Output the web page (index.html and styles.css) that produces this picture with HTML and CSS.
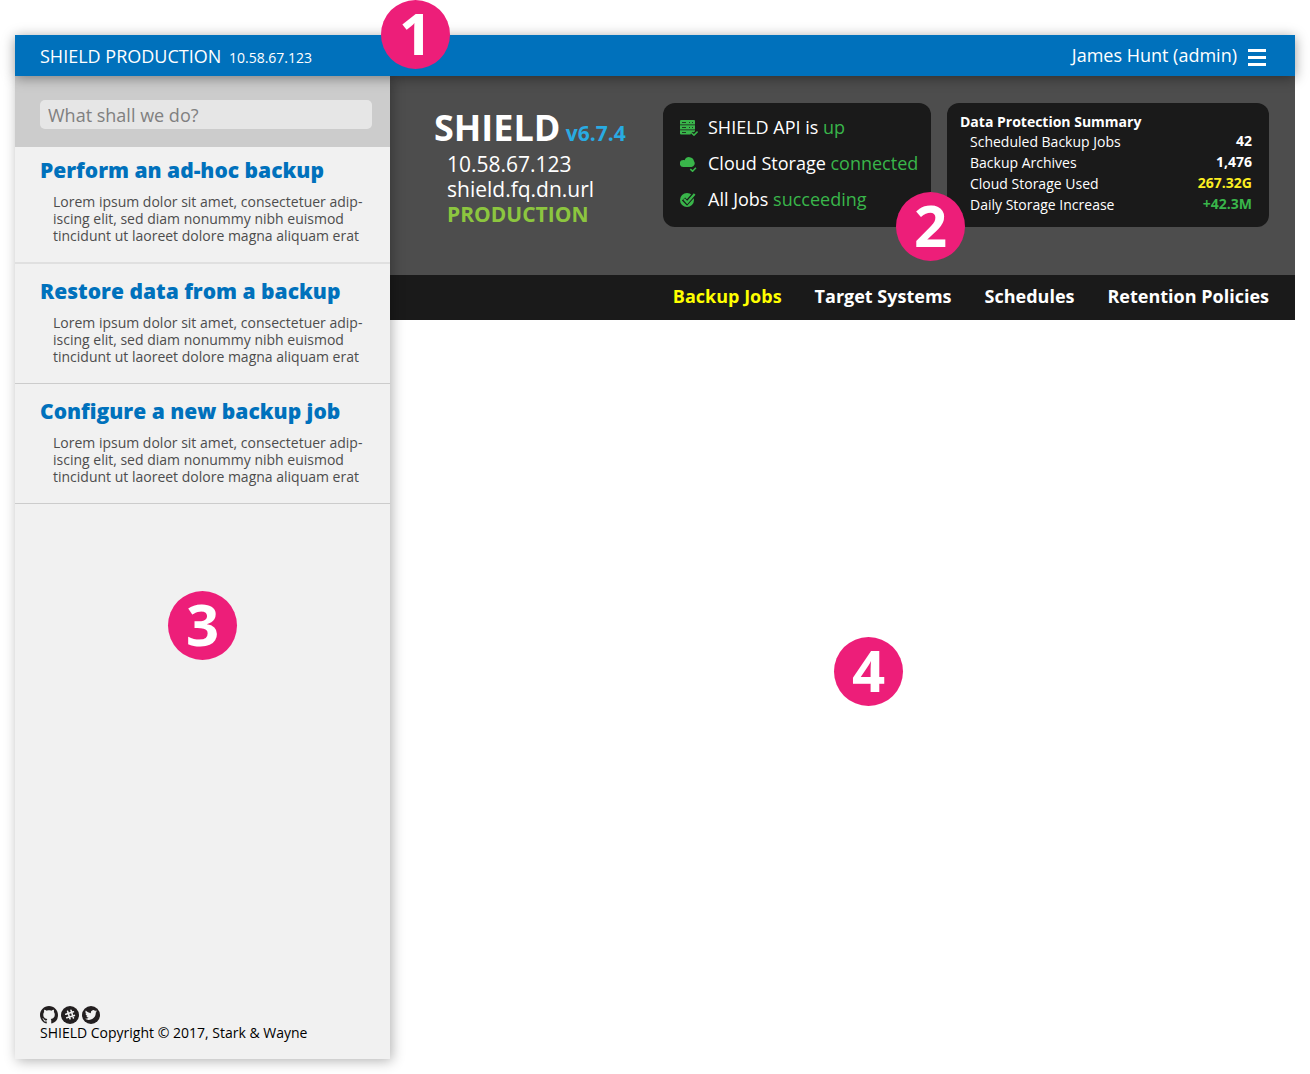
FILE: index.html
```html
<!DOCTYPE html>
<html lang="en">
<head>
<meta charset="utf-8">
<meta name="viewport" content="width=device-width, initial-scale=1">
<title>SHIELD Production</title>
<link rel="stylesheet" href="styles.css">
</head>
<body>
<div class="app">
  <header class="topbar">
    <div class="topbar-site">SHIELD PRODUCTION <span class="topbar-ip">10.58.67.123</span></div>
    <div class="topbar-user">
      <span>James Hunt (admin)</span>
      <button class="menu-button" type="button" aria-label="Menu"><span class="menu-bar"></span><span class="menu-bar"></span><span class="menu-bar"></span></button>
    </div>
    <span class="badge badge-header">1</span>
  </header>

  <div class="layout">
    <aside class="sidebar">
      <form class="search">
        <input class="search-input" type="text" placeholder="What shall we do?" aria-label="What shall we do?">
      </form>
      <section class="task task-first">
        <h2 class="task-title"><a href="#backup">Perform an ad-hoc backup</a></h2>
        <p class="task-text">Lorem ipsum dolor sit amet, consectetuer adip-<br>iscing elit, sed diam nonummy nibh euismod<br>tincidunt ut laoreet dolore magna aliquam erat</p>
      </section>
      <section class="task">
        <h2 class="task-title"><a href="#restore">Restore data from a backup</a></h2>
        <p class="task-text">Lorem ipsum dolor sit amet, consectetuer adip-<br>iscing elit, sed diam nonummy nibh euismod<br>tincidunt ut laoreet dolore magna aliquam erat</p>
      </section>
      <section class="task">
        <h2 class="task-title"><a href="#configure">Configure a new backup job</a></h2>
        <p class="task-text">Lorem ipsum dolor sit amet, consectetuer adip-<br>iscing elit, sed diam nonummy nibh euismod<br>tincidunt ut laoreet dolore magna aliquam erat</p>
      </section>
      <footer class="footer">
        <div class="social">
          <a href="#github" aria-label="GitHub"><svg class="social-icon" viewBox="0 0 16 16"><path fill="#231f20" d="M8 0C3.58 0 0 3.58 0 8c0 3.54 2.29 6.53 5.47 7.59.4.07.55-.17.55-.38 0-.19-.01-.82-.01-1.49-2.01.37-2.53-.49-2.69-.94-.09-.23-.48-.94-.82-1.13-.28-.15-.68-.52-.01-.53.63-.01 1.08.58 1.23.82.72 1.21 1.87.87 2.33.66.07-.52.28-.87.51-1.07-1.78-.2-3.64-.89-3.64-3.95 0-.87.31-1.59.82-2.15-.08-.2-.36-1.02.08-2.12 0 0 .67-.21 2.2.82.64-.18 1.32-.27 2-.27s1.36.09 2 .27c1.53-1.04 2.2-.82 2.2-.82.44 1.1.16 1.92.08 2.12.51.56.82 1.27.82 2.15 0 3.07-1.87 3.75-3.65 3.95.29.25.54.73.54 1.48 0 1.07-.01 1.93-.01 2.2 0 .21.15.46.55.38A8.01 8.01 0 0 0 16 8c0-4.42-3.58-8-8-8z"/></svg></a>
          <a href="#slack" aria-label="Slack"><svg class="social-icon" viewBox="0 0 18 18"><circle cx="9" cy="9" r="9" fill="#231f20"/><path d="M6.6 5.2l2.4 7.6M10 4.3l2.4 7.6M4.8 8.2l7.6-2.4M5.8 11.8l7.6-2.4" fill="none" stroke="#f1f1f1" stroke-width="1.6" stroke-linecap="round"/></svg></a>
          <a href="#twitter" aria-label="Twitter"><svg class="social-icon" viewBox="0 0 18 18"><circle cx="9" cy="9" r="9" fill="#231f20"/><path fill="#f1f1f1" transform="translate(3 3) scale(.5)" d="M23.95 4.57a10 10 0 0 1-2.82.77 4.96 4.96 0 0 0 2.16-2.72c-.95.55-2 .95-3.13 1.18a4.92 4.92 0 0 0-8.38 4.48C7.69 8.09 4.07 6.13 1.64 3.16a4.92 4.92 0 0 0 1.52 6.57 4.9 4.9 0 0 1-2.23-.61v.06a4.92 4.92 0 0 0 3.95 4.83 5 5 0 0 1-2.21.08 4.94 4.94 0 0 0 4.6 3.42A9.87 9.87 0 0 1 0 19.54a13.99 13.99 0 0 0 7.55 2.21c9.06 0 14.01-7.5 14.01-13.98 0-.21 0-.42-.02-.63a9.94 9.94 0 0 0 2.46-2.55z"/></svg></a>
        </div>
        <p class="copyright">SHIELD Copyright © 2017, Stark &amp; Wayne</p>
      </footer>
      <span class="badge badge-sidebar">3</span>
    </aside>

    <main class="main">
      <section class="hero">
        <div class="identity">
          <h1 class="product">SHIELD <span class="version">v6.7.4</span></h1>
          <div class="host">
            <div>10.58.67.123</div>
            <div>shield.fq.dn.url</div>
            <div class="environment">PRODUCTION</div>
          </div>
        </div>
        <div class="card health">
          <div class="health-row">
            <svg class="health-icon" viewBox="0 0 18 18"><path fill="#39b54a" d="M1 2h13a1 1 0 0 1 1 1v3.600H0V3a1 1 0 0 1 1-1zM0 7.200h15v4.300H0zM0 12.200h15v1l-4 3.300H1a1 1 0 0 1-1-1z"/><path stroke="#1a1a1a" stroke-width=".8" d="M2 4.500h4M9 4.500h1M12 4.500h1M2 9.500h4M9 9.500h1M12 9.500h1M2 14.500h4"/><path fill="none" stroke="#1a1a1a" stroke-width="3.600" d="M11.500 15l2.500 2.300 4-4"/><path fill="none" stroke="#39b54a" stroke-width="1.600" d="M11.500 15l2.500 2.100 3.600-3.600"/></svg>
            <span>SHIELD API is <span class="good">up</span></span>
          </div>
          <div class="health-row">
            <svg class="health-icon" viewBox="0 0 18 18"><path fill="#39b54a" d="M3.500 12.900A3.500 3.500 0 0 1 3.200 5.900c.5 0 1 .1 1.400.3A4.900 4.900 0 0 1 14 7.300 3.500 3.500 0 0 1 11.500 12.900z"/><path fill="none" stroke="#39b54a" stroke-width="1.600" d="M10.300 15.200l2.300 2 3.300-3.500"/></svg>
            <span>Cloud Storage <span class="good">connected</span></span>
          </div>
          <div class="health-row">
            <svg class="health-icon" viewBox="0 0 18 18"><circle cx="7" cy="10" r="7" fill="#39b54a"/><path fill="none" stroke="#1a1a1a" stroke-width="4.500" d="M3.500 9l3.500 3.500 8-9"/><path fill="none" stroke="#39b54a" stroke-width="2.200" d="M4 9l3.200 3.500 7.500-8.500"/></svg>
            <span>All Jobs <span class="good">succeeding</span></span>
          </div>
          <span class="badge badge-health">2</span>
        </div>
        <div class="card summary">
          <table class="summary-table">
            <caption>Data Protection Summary</caption>
            <tbody>
              <tr><th scope="row">Scheduled Backup Jobs</th><td>42</td></tr>
              <tr><th scope="row">Backup Archives</th><td>1,476</td></tr>
              <tr><th scope="row">Cloud Storage Used</th><td class="warn">267.32G</td></tr>
              <tr><th scope="row">Daily Storage Increase</th><td class="good">+42.3M</td></tr>
            </tbody>
          </table>
        </div>
      </section>
      <nav class="nav">
        <a class="active" href="#jobs">Backup Jobs</a>
        <a href="#systems">Target Systems</a>
        <a href="#schedules">Schedules</a>
        <a href="#retention">Retention Policies</a>
      </nav>
      <section class="content"><span class="badge badge-content">4</span></section>
    </main>
  </div>
</div>
</body>
</html>
```
FILE: styles.css
```css
* {
  box-sizing: border-box;
}

body {
  margin: 0;
  background: #fff;
  color: #000;
  font-family: "Open Sans", "Noto Sans", sans-serif;
  font-size: 14px;
}

h1, h2, p {
  margin: 0;
}

a {
  color: inherit;
  text-decoration: none;
}

.app {
  display: flex;
  flex-direction: column;
  min-height: 100vh;
  padding: 35px 15px 15px;
}

.topbar {
  position: relative;
  z-index: 3;
  display: flex;
  align-items: center;
  justify-content: space-between;
  min-height: 41px;
  padding: 0 29px 0 25px;
  background: #0071bc;
  box-shadow: 0 2px 12px rgba(0, 0, 0, 0.4);
  color: #fff;
  font-size: 18px;
}

.topbar-ip {
  margin-left: 3px;
  font-size: 14px;
}

.topbar-user {
  display: flex;
  align-items: center;
  gap: 11px;
  padding-bottom: 2px;
}

.menu-button {
  display: flex;
  flex-direction: column;
  gap: 4px;
  padding: 5px 0 0;
  border: 0;
  background: none;
}

.menu-bar {
  width: 18px;
  height: 3px;
  background: #fff;
}

.layout {
  display: flex;
  flex: 1;
}

.sidebar {
  position: relative;
  z-index: 2;
  display: flex;
  flex: 0 0 375px;
  flex-direction: column;
  background: #f1f1f1;
  box-shadow: 2px 2px 12px rgba(0, 0, 0, 0.3);
}

.search {
  padding: 24px 18px 18px 25px;
  background: #ccc;
}

.search-input {
  display: block;
  width: 100%;
  height: 29px;
  padding: 0 8px;
  border: 0;
  border-radius: 5px;
  background: #e6e6e6;
  color: #333;
  font: inherit;
  font-size: 18px;
}

.search-input::placeholder {
  color: #808080;
  opacity: 1;
}

.task {
  padding: 15px 25px 18px;
  border-bottom: 1px solid #ccc;
}

.task-first {
  padding-top: 11px;
  border-bottom: 2px solid #e0e0e0;
}

.task-title {
  color: #0071bc;
  font-size: 21px;
  font-weight: 800;
  line-height: 24px;
}

.task-text {
  padding: 11px 0 0 13px;
  color: #4d4d4d;
  line-height: 17px;
  white-space: nowrap;
}

.footer {
  margin-top: auto;
  padding: 0 25px 17px;
}

.social {
  display: flex;
  gap: 3px;
}

.social-icon {
  display: block;
  width: 18px;
  height: 18px;
}

.copyright {
  line-height: 18px;
}

.main {
  display: flex;
  flex: 1;
  flex-direction: column;
  min-width: 0;
}

.hero {
  display: flex;
  align-items: flex-start;
  gap: 16px;
  padding: 27px 26px 48px 44px;
  background: #4d4d4d;
  color: #fff;
}

.identity {
  flex: 1;
  padding-top: 1px;
}

.product {
  font-size: 36px;
  font-weight: 700;
  line-height: 48px;
  white-space: nowrap;
}

.version {
  margin-left: -4px;
  color: #29abe2;
  font-size: 21px;
  line-height: 1;
}

.host {
  padding-left: 13px;
  font-size: 21px;
  line-height: 25px;
}

.environment {
  color: #8cc63f;
  font-weight: 700;
}

.card {
  min-height: 124px;
  border-radius: 12px;
  background: #1a1a1a;
}

.health {
  position: relative;
  flex: 0 0 268px;
  padding: 6px 0 0 17px;
  font-size: 18px;
  line-height: 36px;
}

.health-row {
  display: flex;
  align-items: center;
  gap: 10px;
  white-space: nowrap;
}

.health-icon {
  width: 18px;
  height: 18px;
}

.good {
  color: #39b54a;
}

.warn {
  color: #fcee21;
}

.summary {
  flex: 0 0 322px;
  padding: 9px 17px 0 13px;
}

.summary-table {
  width: 100%;
  border-collapse: collapse;
  line-height: 21px;
}

.summary-table caption {
  font-weight: 700;
  line-height: 19px;
  text-align: left;
}

.summary-table th {
  padding: 0 0 0 10px;
  font-weight: 400;
  text-align: left;
}

.summary-table td {
  padding: 0;
  font-weight: 700;
  line-height: 19px;
  text-align: right;
  vertical-align: top;
}

.nav {
  display: flex;
  align-items: center;
  justify-content: flex-end;
  gap: 33px;
  min-height: 45px;
  padding: 0 26px 3px;
  background: #1a1a1a;
  color: #fff;
  font-size: 18px;
  font-weight: 700;
}

.nav .active {
  color: #ff0;
}

.content {
  position: relative;
  flex: 1;
}

.badge {
  position: absolute;
  width: 69px;
  height: 69px;
  border-radius: 50%;
  background: #ed1e79;
  color: #fff;
  font-size: 58px;
  font-weight: 700;
  line-height: 65px;
  text-align: center;
}

.badge-header {
  top: -35px;
  left: 366px;
}

.badge-health {
  right: -34px;
  bottom: -34px;
}

.badge-sidebar {
  top: 515px;
  left: 153px;
}

.badge-content {
  top: 317px;
  left: 444px;
}
```
